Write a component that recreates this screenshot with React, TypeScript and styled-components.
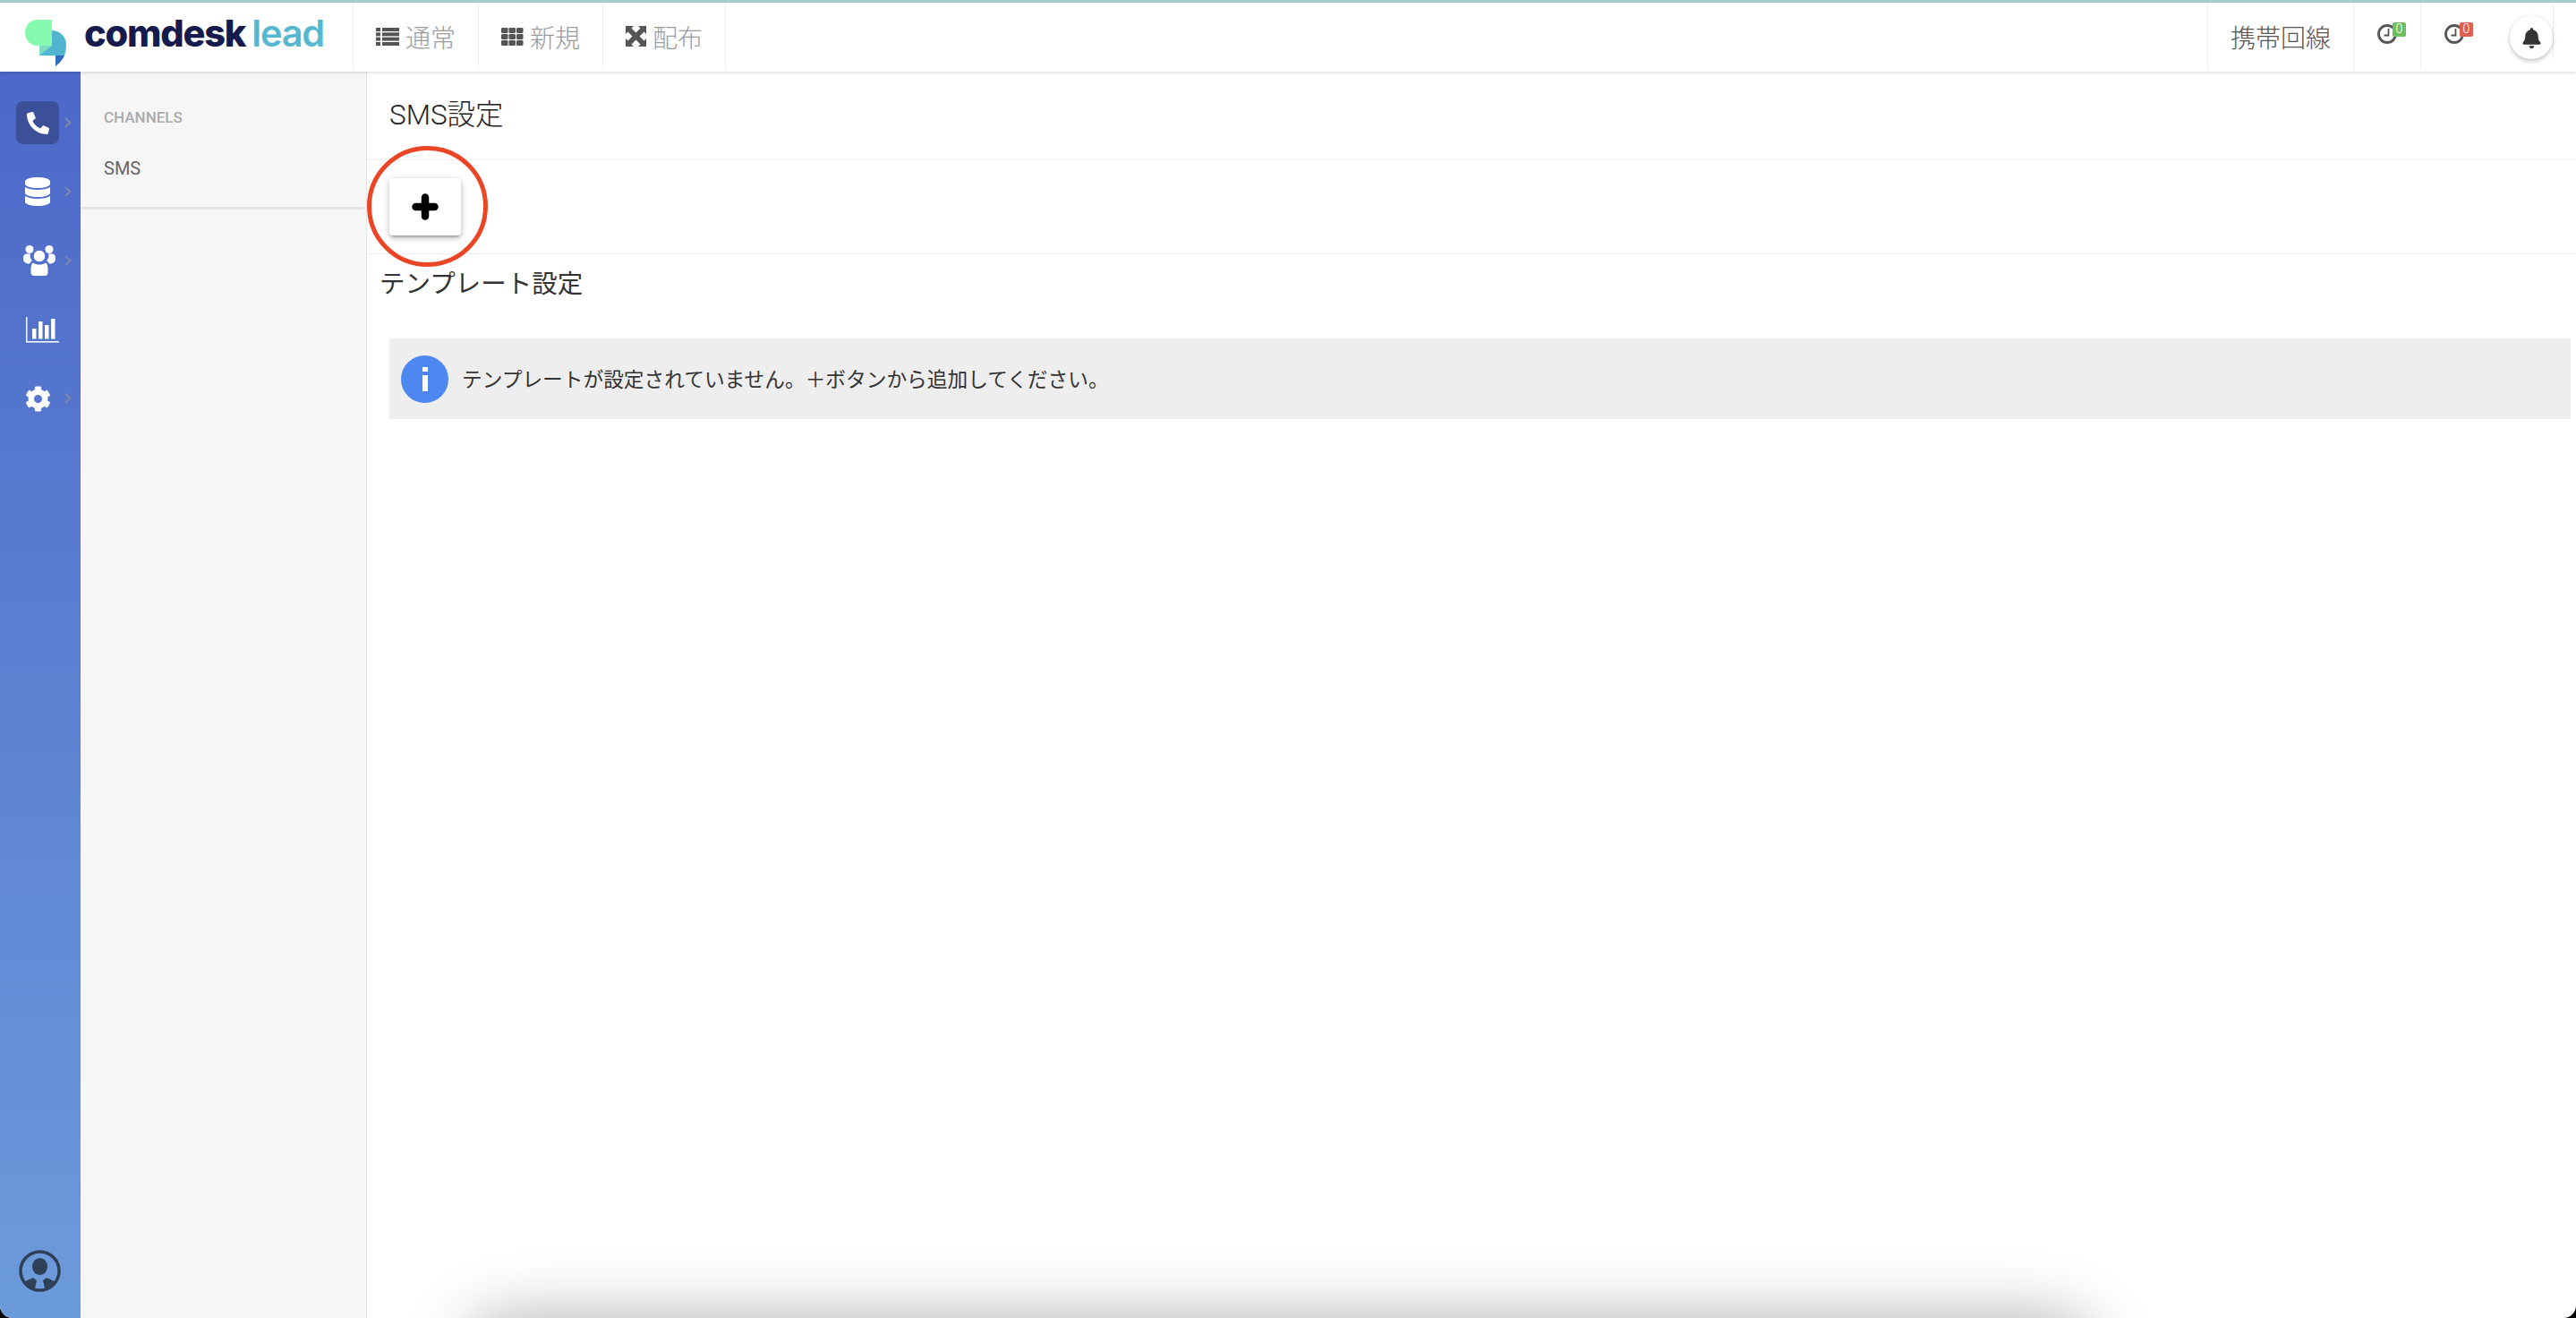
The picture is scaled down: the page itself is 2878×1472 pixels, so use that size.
import React from 'react';
import styled, { createGlobalStyle } from 'styled-components';
import { FaBell, FaCog, FaDatabase, FaPhoneAlt } from 'react-icons/fa';

const GlobalStyle = createGlobalStyle`
  html, body {
    margin: 0;
    height: 100%;
    background: #000000;
    overflow: hidden;
  }
  * {
    box-sizing: border-box;
  }
`;

const Page = styled.div`
  position: relative;
  display: flex;
  flex-direction: column;
  width: 2878px;
  height: 1472px;
  overflow: hidden;
  background: #ffffff;
  border-radius: 0 0 14px 14px;
  font-family: Roboto, "Noto Sans CJK JP", sans-serif;
`;

const Header = styled.header`
  position: relative;
  z-index: 2;
  display: flex;
  flex: none;
  height: 80px;
  background: #ffffff;
  border-top: 3px solid #a6cbcf;
  box-shadow: 0 1px 4px rgba(0, 0, 0, 0.16);
`;

const Brand = styled.div`
  display: flex;
  align-items: center;
  width: 394px;
  padding-left: 28px;
`;

const Wordmark = styled.div`
  display: flex;
  margin-left: 20px;
  margin-top: -9px;
  font-family: Inter, sans-serif;
  font-size: 41.5px;
  line-height: 48px;
  letter-spacing: -1.2px;
`;

const WordDark = styled.span`
  font-weight: 800;
  color: #161b4d;
`;

const WordLight = styled.span`
  margin-left: 7px;
  font-weight: 600;
  color: #55b8d0;
`;

const NavItem = styled.div<{ $dark?: boolean }>`
  display: flex;
  align-items: center;
  gap: 7px;
  height: 75px;
  padding: 0 25px;
  border-left: 1px solid #eeeeee;
  font-size: 28px;
  font-weight: 300;
  color: ${p => (p.$dark ? '#555555' : '#9b9b9b')};
  &:nth-child(4) {
    border-right: 1px solid #eeeeee;
  }
  svg {
    flex: none;
    color: #555555;
  }
`;

const RightGroup = styled.div`
  display: flex;
  margin-left: auto;
`;

const ClockCell = styled.div`
  position: relative;
  width: 75px;
  height: 75px;
  border-left: 1px solid #eeeeee;
`;

const ClockIcon = styled.svg`
  position: absolute;
  left: 26px;
  top: 24px;
`;

const Badge = styled.span<{ $bg: string }>`
  position: absolute;
  left: 43px;
  top: 22px;
  width: 15px;
  height: 16px;
  border-radius: 2px;
  background: ${p => p.$bg};
  color: #ffffff;
  font-size: 14px;
  font-weight: 300;
  line-height: 15px;
  text-align: center;
`;

const BellCell = styled.div`
  position: relative;
  width: 74px;
  height: 62px;
  margin-right: 25px;
  border-right: 1px solid #eeeeee;
`;

const BellButton = styled.div`
  position: absolute;
  right: 0;
  top: 15px;
  display: flex;
  align-items: center;
  justify-content: center;
  width: 48px;
  height: 48px;
  border-radius: 50%;
  background: #ffffff;
  color: #333333;
  font-size: 23px;
  box-shadow: 0 2px 5px rgba(0, 0, 0, 0.26);
`;

const Body = styled.div`
  display: flex;
  flex: 1;
  min-height: 0;
`;

const Sidebar = styled.aside`
  display: flex;
  flex: none;
  flex-direction: column;
  width: 90px;
  padding: 33px 0 29px 18px;
  background: linear-gradient(180deg, #4c68c8 0%, #6c9bdb 100%);
`;

const SideItem = styled.div<{ $active?: boolean }>`
  position: relative;
  display: flex;
  flex: none;
  align-items: center;
  justify-content: center;
  width: 48px;
  height: 48px;
  margin-bottom: 29px;
  border-radius: 8px;
  background: ${p => (p.$active ? '#3b5098' : 'transparent')};
  color: #ffffff;
`;

const Chevron = styled.svg`
  position: absolute;
  left: 54px;
  top: 18px;
`;

const Avatar = styled.svg`
  margin-top: auto;
  margin-left: 3px;
`;

const SubNav = styled.nav`
  flex: none;
  width: 320px;
  background: #f6f6f6;
  border-right: 1px solid #e2e2e2;
`;

const SubNavGroup = styled.div`
  padding: 40px 26px 29px;
  border-bottom: 3px solid #e5e5e5;
  margin-right: 2px;
`;

const SubNavLabel = styled.div`
  font-size: 17px;
  font-weight: 500;
  line-height: 22px;
  color: #ababab;
`;

const SubNavLink = styled.div`
  margin-top: 32px;
  font-size: 20px;
  line-height: 28px;
  color: #666666;
`;

const Main = styled.main`
  flex: 1;
  min-width: 0;
`;

const TitleBar = styled.div`
  display: flex;
  align-items: center;
  height: 99px;
  padding: 0 25px 8px;
  border-bottom: 1px solid #eeeeee;
  font-size: 31.5px;
  font-weight: 300;
  color: #222222;
`;

const ButtonRow = styled.div`
  display: flex;
  align-items: center;
  height: 105px;
  padding: 0 25px;
  border-bottom: 1px solid #eeeeee;
`;

const AddWrap = styled.div`
  position: relative;
`;

const AddButton = styled.button`
  display: flex;
  align-items: center;
  justify-content: center;
  width: 80px;
  height: 64px;
  padding: 0;
  border: 0;
  border-radius: 4px;
  background: #ffffff;
  color: #000000;
  box-shadow: 0 3px 3px -2px rgba(0, 0, 0, 0.3), 0 3px 6px 0 rgba(0, 0, 0, 0.2), 0 1px 8px 0 rgba(0, 0, 0, 0.1);
`;

const RedRing = styled.div`
  position: absolute;
  left: -25px;
  top: -36px;
  width: 135px;
  height: 135px;
  border: 5px solid #ea4525;
  border-radius: 50%;
  pointer-events: none;
`;

const SectionTitle = styled.h2`
  margin: 16px 0 0 14px;
  font-size: 28.5px;
  font-weight: 400;
  line-height: 36px;
  color: #333333;
`;

const Notice = styled.div`
  display: flex;
  align-items: center;
  gap: 15px;
  height: 90px;
  margin: 42px 6px 0 25px;
  padding: 0 0 2px 13px;
  background: #eeeeee;
  font-size: 22.7px;
  font-weight: 400;
  color: #333333;
`;

const InfoDot = styled.div`
  display: flex;
  flex: none;
  align-items: center;
  justify-content: center;
  width: 53px;
  height: 53px;
  margin-top: 2px;
  border-radius: 50%;
  background: #4c88f0;
  color: #ffffff;
`;

const BottomShadow = styled.div`
  position: absolute;
  left: 540px;
  top: 1490px;
  width: 1780px;
  height: 60px;
  border-radius: 30px;
  box-shadow: 0 0 70px 20px rgba(0, 0, 0, 0.3);
  pointer-events: none;
`;

const Logo = () => (
  <svg width="46" height="52" viewBox="0 0 46 52" style={{ marginTop: 12, flex: 'none' }}>
    <path d="M16 12H30C39 12 46 19 46 28C46 33 45 37 44 40H16z" fill="#50b6d0" />
    <path d="M34 40H44C42 45 38 49 34 52z" fill="#2f6cbf" />
    <path d="M14 0h16v29H14C5 29 0 22 0 14.500S5 0 14 0z" fill="#86fbb0" />
    <path d="M16 29h14L16 40z" fill="#7edcc0" />
  </svg>
);

const ListIcon = () => (
  <svg width="26" height="20" viewBox="0 0 26 20" fill="currentColor">
    <rect x="0" y="0" width="5" height="4" />
    <rect x="7" y="0" width="19" height="4" />
    <rect x="0" y="5.300" width="5" height="4" />
    <rect x="7" y="5.300" width="19" height="4" />
    <rect x="0" y="10.600" width="5" height="4" />
    <rect x="7" y="10.600" width="19" height="4" />
    <rect x="0" y="16" width="5" height="4" />
    <rect x="7" y="16" width="19" height="4" />
  </svg>
);

const GridIcon = () => (
  <svg width="25" height="20" viewBox="0 0 25 20" fill="currentColor">
    {[0, 7, 14].map(y =>
      [0, 8.500, 17].map(x => <rect key={`${x}-${y}`} x={x} y={y} width="7.500" height="6" rx="1.200" />)
    )}
  </svg>
);

const ExpandIcon = () => (
  <svg width="23" height="23" viewBox="0 0 23 23" fill="currentColor">
    <path d="M0 0h9L6.500 2.500 11.500 7.500 16.500 2.500 14 0h9v9l-2.500-2.500L15.500 11.500 20.500 16.500 23 14v9h-9l2.500-2.500L11.500 15.500 6.500 20.500 9 23H0v-9l2.500 2.500L7.500 11.500 2.500 6.500 0 9z" />
  </svg>
);

const PlusIcon = () => (
  <svg width="30" height="30" viewBox="0 0 30 30" stroke="currentColor" strokeWidth="8.500" strokeLinecap="round">
    <path d="M15 4.500v21M4.500 15h21" />
  </svg>
);

const InfoGlyph = () => (
  <svg width="6" height="27" viewBox="0 0 6 27" fill="currentColor">
    <rect x="0" y="0" width="6" height="5" />
    <rect x="0" y="9" width="6" height="18" />
  </svg>
);

const UsersIcon = () => (
  <svg width="36" height="34" viewBox="0 0 36 34" fill="currentColor" style={{ marginLeft: 3 }}>
    <circle cx="7" cy="4.500" r="4.500" />
    <circle cx="29" cy="4.500" r="4.500" />
    <path d="M3 9.500h5a7 7 0 0 0 2 7.500 10 10 0 0 0-3 3.500C3 20.500 0 19 0 15c0-3 1-5.500 3-5.500z" />
    <path d="M33 9.500h-5a7 7 0 0 1-2 7.500 10 10 0 0 1 3 3.500c4 0 7-1.500 7-5.500 0-3-1-5.500-3-5.500z" />
    <circle cx="18" cy="12" r="6.800" stroke="#4f6ecb" strokeWidth="1" />
    <path d="M11 19.500c2 1.500 4.500 2 7 2s5-.5 7-2c2 1 2.500 4 2.500 8v3c0 2-1.500 3.500-3.500 3.500H12c-2 0-3.500-1.500-3.500-3.500v-3c0-4 .5-7 2.500-8z" />
  </svg>
);

const ChartIcon = () => (
  <svg width="38" height="29" viewBox="0 0 38 29" fill="currentColor" style={{ marginLeft: 12, flex: 'none' }}>
    <rect x="0" y="0" width="1.500" height="28" />
    <rect x="0" y="27" width="37" height="1.500" />
    <rect x="7" y="13" width="4.500" height="11.500" />
    <rect x="14" y="5" width="4.500" height="19.500" />
    <rect x="21" y="9" width="4.500" height="15.500" />
    <rect x="28" y="2" width="4.500" height="22.500" />
  </svg>
);

const ClockGlyph = () => (
  <ClockIcon width="22" height="22" viewBox="0 0 22 22" fill="none" stroke="#555555">
    <circle cx="11" cy="11" r="9.500" strokeWidth="2.800" />
    <path d="M12.500 5v7.500H7.500" strokeWidth="1.800" />
  </ClockIcon>
);

const SideChevron = () => (
  <Chevron width="8" height="12" viewBox="0 0 8 12" fill="none" stroke="#8189a6" strokeWidth="1.700">
    <path d="M1 1l5.500 5L1 11" />
  </Chevron>
);

const App: React.FC = () => (
  <>
    <GlobalStyle />
    <Page>
      <Header>
        <Brand>
          <Logo />
          <Wordmark>
            <WordDark>comdesk</WordDark>
            <WordLight>lead</WordLight>
          </Wordmark>
        </Brand>
        <NavItem>
          <ListIcon />
          通常
        </NavItem>
        <NavItem>
          <GridIcon />
          新規
        </NavItem>
        <NavItem>
          <ExpandIcon />
          配布
        </NavItem>
        <RightGroup>
          <NavItem $dark>携帯回線</NavItem>
          <ClockCell>
            <ClockGlyph />
            <Badge $bg="#6cbf60">0</Badge>
          </ClockCell>
          <ClockCell>
            <ClockGlyph />
            <Badge $bg="#e0604f">0</Badge>
          </ClockCell>
          <BellCell>
            <BellButton>
              <FaBell />
            </BellButton>
          </BellCell>
        </RightGroup>
      </Header>
      <Body>
        <Sidebar>
          <SideItem $active>
            <FaPhoneAlt size={25} />
            <SideChevron />
          </SideItem>
          <SideItem>
            <FaDatabase size={32} />
            <SideChevron />
          </SideItem>
          <SideItem>
            <UsersIcon />
            <SideChevron />
          </SideItem>
          <SideItem>
            <ChartIcon />
          </SideItem>
          <SideItem>
            <FaCog size={29} />
            <SideChevron />
          </SideItem>
          <Avatar width="47" height="47" viewBox="0 0 47 47" fill="#2f3f56">
            <circle cx="23.500" cy="23.500" r="21.500" fill="none" stroke="#2f3f56" strokeWidth="3.500" />
            <ellipse cx="23.500" cy="18.500" rx="8.500" ry="9.500" />
            <path d="M5 36l11-5 4 3-2.500 11C12 44 8 41 5 36z" />
            <path d="M42 36l-11-5-4 3 2.500 11c5.500-1 9.500-4 12-9z" />
          </Avatar>
        </Sidebar>
        <SubNav>
          <SubNavGroup>
            <SubNavLabel>CHANNELS</SubNavLabel>
            <SubNavLink>SMS</SubNavLink>
          </SubNavGroup>
        </SubNav>
        <Main>
          <TitleBar>SMS設定</TitleBar>
          <ButtonRow>
            <AddWrap>
              <AddButton aria-label="add">
                <PlusIcon />
              </AddButton>
              <RedRing />
            </AddWrap>
          </ButtonRow>
          <SectionTitle>テンプレート設定</SectionTitle>
          <Notice>
            <InfoDot>
              <InfoGlyph />
            </InfoDot>
            テンプレートが設定されていません。＋ボタンから追加してください。
          </Notice>
        </Main>
      </Body>
      <BottomShadow />
    </Page>
  </>
);

export default App;
